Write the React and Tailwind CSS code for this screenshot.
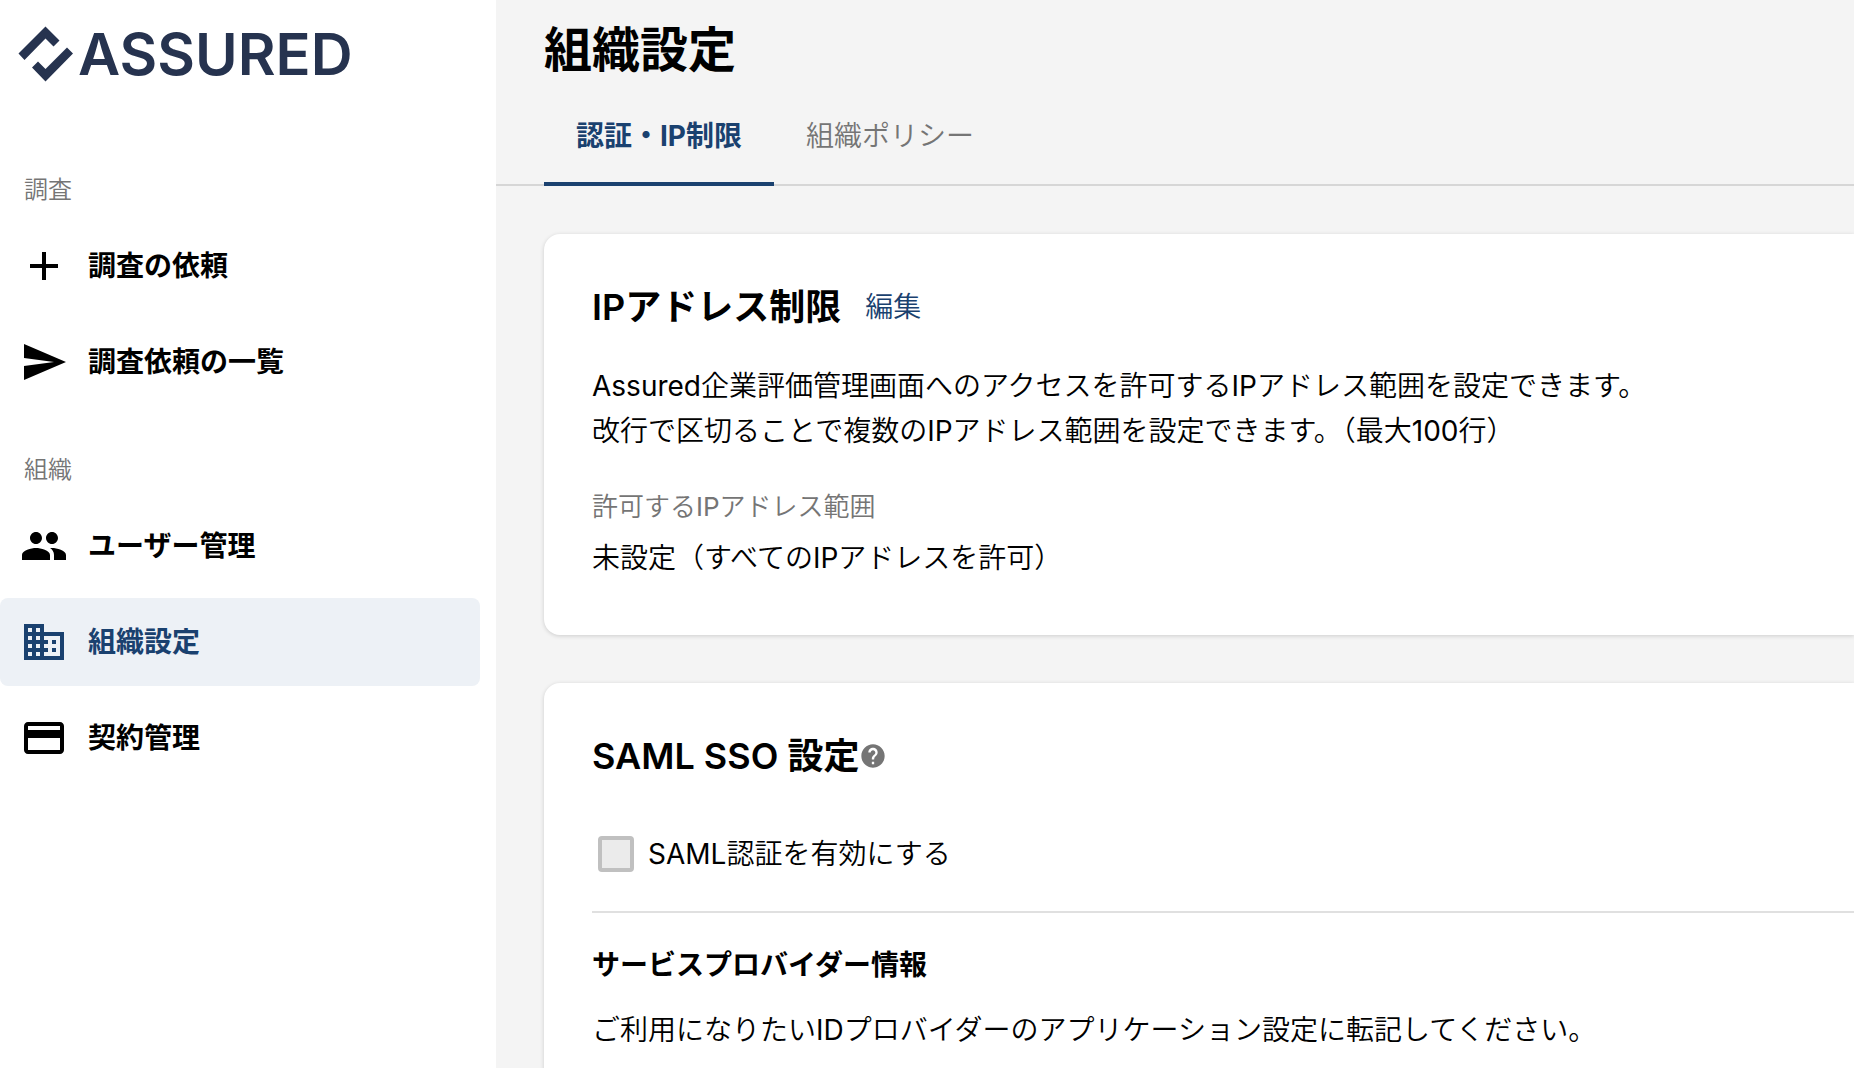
import { useState } from "react"
import clsx from "clsx"
import { MdAdd, MdSend, MdPeople, MdBusiness, MdCreditCard, MdHelp } from "react-icons/md"

const navSections = [
  {
    title: "調査",
    items: [
      { label: "調査の依頼", icon: MdAdd },
      { label: "調査依頼の一覧", icon: MdSend },
    ],
  },
  {
    title: "組織",
    items: [
      { label: "ユーザー管理", icon: MdPeople },
      { label: "組織設定", icon: MdBusiness, active: true },
      { label: "契約管理", icon: MdCreditCard },
    ],
  },
]

const tabs = ["認証・IP制限", "組織ポリシー"]

function Logo() {
  return (
    <a href="#" className="flex items-center gap-1 pl-[18px] h-14 text-[#26334f]">
      <svg viewBox="0 0 56 56" className="w-14 h-14 shrink-0" fill="currentColor" aria-hidden="true">
        <path d="M27.5 0.5 L41.5 14.5 L35.5 20.5 L27.5 12.5 L6.5 34 L0.5 27.5 Z" />
        <path d="M49 21.5 L55 27.5 L27.5 55.5 L14 41.5 L20 35.5 L27.5 43 Z" />
      </svg>
      <span className="font-['Inter'] font-semibold text-[58px] leading-none">ASSURED</span>
    </a>
  )
}

function Sidebar() {
  return (
    <aside className="w-[496px] shrink-0 bg-white pt-[26px]">
      <Logo />
      <nav className="pt-[88px] pr-4">
        {navSections.map((section) => (
          <div key={section.title} className="mb-11">
            <h2 className="px-6 pb-3 text-2xl leading-10 text-[#757575]">{section.title}</h2>
            <ul className="flex flex-col gap-2">
              {section.items.map(({ label, icon: Icon, active }) => (
                <li key={label}>
                  <a
                    href="#"
                    className={clsx(
                      "flex items-center gap-5 h-[88px] px-5 rounded-lg text-[28px] font-semibold font-['Inter','Noto_Sans_CJK_JP',sans-serif]",
                      active ? "bg-[#edf1f6] text-[#1a416f]" : "text-black"
                    )}
                  >
                    <Icon className="w-12 h-12 shrink-0" />
                    {label}
                  </a>
                </li>
              ))}
            </ul>
          </div>
        ))}
      </nav>
    </aside>
  )
}

function Card({ children }) {
  return (
    <section className="bg-white rounded-l-2xl py-12 pl-12 shadow-[0_1px_4px_rgba(0,0,0,0.16)]">
      {children}
    </section>
  )
}

function CardTitle({ children }) {
  return (
    <h2 className="text-4xl leading-[50px] font-semibold font-['Inter','Noto_Sans_CJK_JP',sans-serif]">
      {children}
    </h2>
  )
}

export default function App() {
  const [activeTab, setActiveTab] = useState(tabs[0])
  const [samlEnabled, setSamlEnabled] = useState(false)

  return (
    <div
      lang="ja"
      className="flex min-h-screen bg-[#f4f4f4] text-black font-['Inter','Noto_Sans_CJK_JP_DemiLight','Noto_Sans_CJK_JP',sans-serif]"
    >
      <Sidebar />

      <main className="flex-1 min-w-0">
        <h1 className="px-12 pt-5 text-5xl leading-[60px] font-bold font-['Inter','Noto_Sans_CJK_JP',sans-serif]">
          組織設定
        </h1>

        {/* Tabs */}
        <div role="tablist" className="flex mt-1 px-12 border-b-2 border-[#d6d6d6]">
          {tabs.map((tab) => (
            <button
              key={tab}
              role="tab"
              aria-selected={activeTab === tab}
              onClick={() => setActiveTab(tab)}
              className={clsx(
                "-mb-0.5 h-[102px] px-8 pt-1.5 text-[28px] border-b-4 cursor-pointer",
                activeTab === tab
                  ? "border-[#1a416f] text-[#1a416f] font-bold font-['Inter','Noto_Sans_CJK_JP',sans-serif]"
                  : "border-transparent text-[#757575]"
              )}
            >
              {tab}
            </button>
          ))}
        </div>

        <div className="flex flex-col gap-12 pl-12 pt-12">
          {/* IP address restriction */}
          <Card>
            <div className="flex items-center gap-6">
              <CardTitle>IPアドレス制限</CardTitle>
              <button className="text-[28px] text-[#1a416f] cursor-pointer">編集</button>
            </div>
            <p className="mt-8 text-[28px] leading-[45px]">
              Assured企業評価管理画面へのアクセスを許可するIPアドレス範囲を設定できます。
              <br />
              改行で区切ることで複数のIPアドレス範囲を設定できます。（最大100行）
            </p>
            <dl className="mt-8">
              <dt className="text-[26px] leading-[42px] text-[#757575]">許可するIPアドレス範囲</dt>
              <dd className="mt-2 mb-1.5 text-[28px] leading-[45px]">未設定（すべてのIPアドレスを許可）</dd>
            </dl>
          </Card>

          {/* SAML SSO */}
          <Card>
            <div className="flex items-center">
              <CardTitle>SAML SSO 設定</CardTitle>
              <button aria-label="ヘルプ" className="text-[#757575] cursor-pointer">
                <MdHelp className="w-7 h-7" />
              </button>
            </div>
            <label className="flex items-center gap-[14px] mt-12 pl-[6px] text-[28px] leading-[50px]">
              <input
                type="checkbox"
                checked={samlEnabled}
                onChange={(e) => setSamlEnabled(e.target.checked)}
                className="appearance-none w-9 h-9 rounded-sm border-4 border-[#c0c0c0] bg-[#ebebeb] checked:bg-[#1a416f]"
              />
              SAML認証を有効にする
            </label>
            <hr className="mt-8 border-t-2 border-[#e0e0e0]" />
            <h3 className="mt-[30px] text-[28px] leading-[45px] font-semibold font-['Inter','Noto_Sans_CJK_JP',sans-serif]">
              サービスプロバイダー情報
            </h3>
            <p className="mt-5 text-[28px] leading-[45px]">
              ご利用になりたいIDプロバイダーのアプリケーション設定に転記してください。
            </p>
          </Card>
        </div>
      </main>
    </div>
  )
}
